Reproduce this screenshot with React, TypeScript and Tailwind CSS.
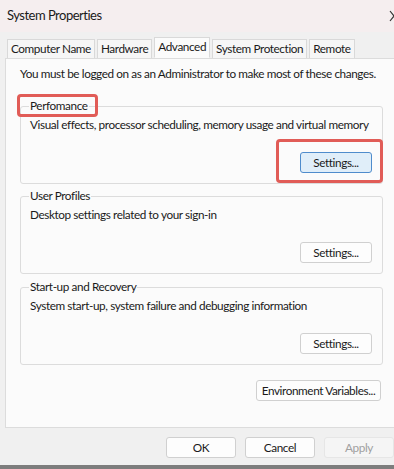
import React from "react";

const font = { fontFamily: 'Lato, "Segoe UI", sans-serif' };

function Btn({
  children,
  className = "",
  focused = false,
  disabled = false,
}: {
  children: React.ReactNode;
  className?: string;
  focused?: boolean;
  disabled?: boolean;
}) {
  return (
    <div
      className={
        "h-[21px] flex items-center justify-center rounded-[3px] border text-[11.75px] tracking-[-0.4px] leading-none whitespace-nowrap " +
        (focused
          ? "bg-[#e0eef9] border-[#4f8ccc] text-[#1a1a1a] "
          : disabled
          ? "bg-[#f5f5f5] border-[#e6e6e6] text-[#a0a0a0] "
          : "bg-[#fdfdfd] border-[#d0d0d0] text-[#1a1a1a] ") +
        className
      }
    >
      {children}
    </div>
  );
}

function Group({
  title,
  desc,
  highlightTitle = false,
  highlightBtn = false,
  className = "",
}: {
  title: string;
  desc: string;
  highlightTitle?: boolean;
  highlightBtn?: boolean;
  className?: string;
}) {
  return (
    <fieldset
      className={
        "border border-[#dcdcdc] rounded-[3px] ml-[14px] w-[363px] px-[9px] pb-[10px] " +
        className
      }
    >
      <legend className="ml-[-1px] px-[1px] text-[11.75px] tracking-[-0.4px] leading-[16px] text-[#1a1a1a] relative whitespace-nowrap">
        {title}
        {highlightTitle && (
          <span className="absolute left-[-12px] right-[-9px] top-[-4px] bottom-[-3px] border-[3px] border-[#e15c57] rounded-[4px]" />
        )}
      </legend>
      <div className="text-[11.75px] tracking-[-0.4px] leading-[16px] text-[#1a1a1a] mt-[3px] whitespace-nowrap">{desc}</div>
      <div className="flex justify-end mt-[19px] pr-[1px]">
        <div className="relative">
          <Btn focused={highlightBtn} className="w-[72px]">
            Settings...
          </Btn>
          {highlightBtn && (
            <span className="absolute left-[-24px] right-[-11px] top-[-13px] bottom-[-10px] border-[3px] border-[#e15c57] rounded-[4px]" />
          )}
        </div>
      </div>
    </fieldset>
  );
}

export default function App() {
  const tabs = ["Computer Name", "Hardware", "Advanced", "System Protection", "Remote"];
  return (
    <div className="w-[394px] h-[469px] overflow-hidden bg-[#7d7d7d] text-[#1a1a1a]" style={font}>
      <div className="h-[465px] bg-[#f0f0f0] flex flex-col">
        <div className="h-[32px] bg-[#f5eeef] flex items-center justify-between pl-[7px]">
          <span className="text-[13px] tracking-[-0.5px] text-[#1a1a1a]">System Properties</span>
          <svg width="10" height="12" viewBox="0 0 10 12" className="mr-[-5px]">
            <path d="M1 1 L9 11 M9 1 L1 11" stroke="#333" strokeWidth="1.2" fill="none" />
          </svg>
        </div>
        <div className="flex items-end pl-[7px] mt-[5px] h-[21px] relative z-10">
          {tabs.map((t) => (
            <div
              key={t}
              className={
                "text-[11.75px] tracking-[-0.4px] leading-none flex items-center px-[3px] border border-[#d9d9d9] mr-[2px] whitespace-nowrap " +
                (t === "Advanced"
                  ? "h-[21px] bg-[#fbfbfb] border-b-[#fbfbfb] pb-[2px]"
                  : "h-[19px] bg-[#f6f6f6] border-b-0")
              }
            >
              {t}
            </div>
          ))}
        </div>
        <div className="ml-[5px] w-[400px] h-[370px] bg-[#fbfbfb] border border-[#dcdcdc] flex flex-col pt-[7px]">
          <div className="text-[11.75px] tracking-[-0.4px] leading-[16px] pl-[14px] whitespace-nowrap">
            You must be logged on as an Administrator to make most of these changes.
          </div>
          <Group
            title="Perfomance"
            desc="Visual effects, processor scheduling, memory usage and virtual memory"
            highlightTitle
            highlightBtn
            className="mt-[16px]"
          />
          <Group
            title="User Profiles"
            desc="Desktop settings related to your sign-in"
            className="mt-[4px]"
          />
          <Group
            title="Start-up and Recovery"
            desc="System start-up, system failure and debugging information"
            className="mt-[5px]"
          />
          <div className="flex mt-[15px] pl-[250px]">
            <Btn className="w-[125px]">Environment Variables...</Btn>
          </div>
        </div>
        <div className="flex pl-[166px] gap-[9px] mt-[9px]">
          <Btn className="w-[72px]">OK</Btn>
          <Btn className="w-[72px]">Cancel</Btn>
          <Btn disabled className="w-[72px]">Apply</Btn>
        </div>
      </div>
    </div>
  );
}
